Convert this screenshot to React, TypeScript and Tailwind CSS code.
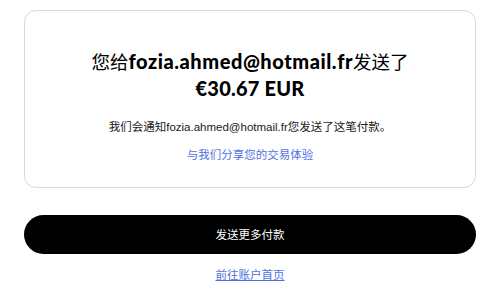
export default function App() {
  const email = 'fozia.ahmed@hotmail.fr';

  return (
    <div className="w-[500px] h-[295px] bg-white font-['Lato','Noto_Sans_CJK_SC',sans-serif] text-black">
      <div className="px-6 pt-[10px]">
        <div className="h-[178px] rounded-xl border border-[#d9d9d9] flex flex-col items-center pt-[37px]">
          <h1 className="text-center text-[19px] leading-[26px]">
            <span className="font-['Noto_Sans_CJK_SC',sans-serif] font-normal text-[18.5px]">您给</span>
            <span className="font-black text-[20px] tracking-[0.55px]">{email}</span>
            <span className="font-['Noto_Sans_CJK_SC',sans-serif] font-normal text-[18.5px]">发送了</span>
            <br />
            <span className="font-black text-[20px] tracking-[0.2px]">€30.67 EUR</span>
          </h1>
          <p className="mt-[17px] text-[11.5px] leading-4 text-[#1a1a1a] font-['Liberation_Sans','Noto_Sans_CJK_SC',sans-serif]">
            我们会通知{email}您发送了这笔付款。
          </p>
          <a href="#" className="mt-[11px] text-[11.5px] leading-4 text-[#5070e2] font-['Noto_Sans_CJK_SC',sans-serif]">
            与我们分享您的交易体验
          </a>
        </div>
        <button className="mt-[27px] w-full h-[39px] rounded-full bg-black text-white text-[11.5px] font-['Noto_Sans_CJK_SC',sans-serif]">
          发送更多付款
        </button>
        <div className="mt-[12px] flex justify-center">
          <a href="#" className="text-[11.5px] leading-4 text-[#5070e2] underline font-['Noto_Sans_CJK_SC',sans-serif]">
            前往账户首页
          </a>
        </div>
      </div>
    </div>
  );
}
